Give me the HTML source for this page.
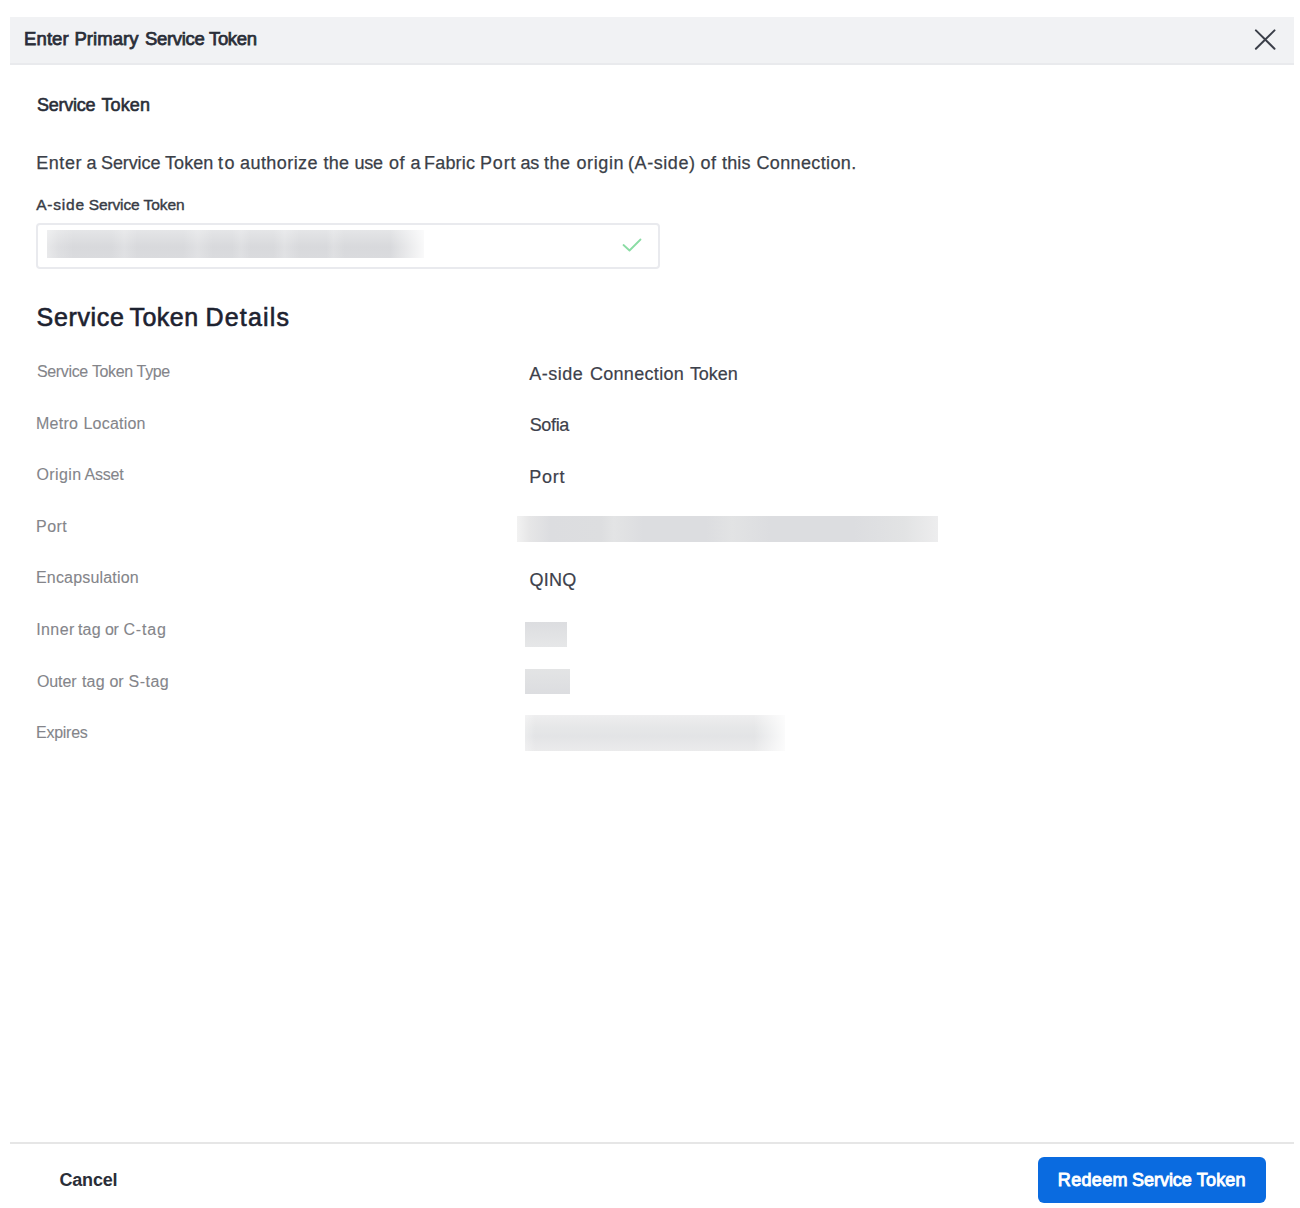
<!DOCTYPE html>
<html>
<head>
<meta charset="utf-8">
<style>
html, body { margin:0; padding:0; }
body { width:1300px; height:1208px; background:#fff; position:relative; overflow:hidden;
  font-family:"Liberation Sans", sans-serif; }
.t { position:absolute; white-space:nowrap; line-height:1; }
#hdr { position:absolute; left:10px; top:17px; width:1284px; height:48px; background:#f1f2f4;
  box-sizing:border-box; border-bottom:2px solid #e9eaed; }
#close { position:absolute; left:1253px; top:28px; width:24px; height:24px; }
#input { position:absolute; left:36px; top:223px; width:624px; height:46px; box-sizing:border-box;
  border:2px solid #e9eaee; border-radius:4px; background:#fff; }
.blur { position:absolute; }
#footline { position:absolute; left:10px; top:1142px; width:1284px; height:2px; background:#e6e6e6; }
#btn { position:absolute; left:1038px; top:1157px; width:228px; height:46px; background:#0a6be0;
  border-radius:6px; }
.lbl { color:#84858a; -webkit-text-stroke:0.1px #84858a; }
.val { color:#3d414b; -webkit-text-stroke:0.2px #3d414b; }
</style>
</head>
<body>
<div id="hdr"></div>
<div class="t" style="left:24.10px; top:30.34px; font-size:18.5px; letter-spacing:0.086px; -webkit-text-stroke:0.75px #2a2e38; color:#2a2e38;">Enter</div>
<div class="t" style="left:74.40px; top:30.34px; font-size:18.5px; letter-spacing:0.072px; -webkit-text-stroke:0.75px #2a2e38; color:#2a2e38;">Primary</div>
<div class="t" style="left:145.00px; top:30.34px; font-size:18.5px; letter-spacing:-0.316px; -webkit-text-stroke:0.75px #2a2e38; color:#2a2e38;">Service</div>
<div class="t" style="left:209.00px; top:30.34px; font-size:18.5px; letter-spacing:-0.350px; -webkit-text-stroke:0.75px #2a2e38; color:#2a2e38;">Token</div>
<svg id="close" viewBox="0 0 24 24"><path d="M2.9 2.4 L21.5 20.7 M21.5 2.4 L2.9 20.7" stroke="#3b3f49" stroke-width="2" stroke-linecap="round" fill="none"/></svg>
<div class="t" style="left:37.00px; top:95.76px; font-size:18px; letter-spacing:-0.252px; -webkit-text-stroke:0.6px #2a2e38; color:#2a2e38;">Service</div>
<div class="t" style="left:101.50px; top:95.76px; font-size:18px; letter-spacing:0.120px; -webkit-text-stroke:0.6px #2a2e38; color:#2a2e38;">Token</div>
<div class="t" style="left:36.20px; top:153.96px; font-size:18px; letter-spacing:0.568px; -webkit-text-stroke:0.25px #3b3f48; color:#3b3f48;">Enter</div>
<div class="t" style="left:86.50px; top:153.96px; font-size:18px; letter-spacing:0.000px; -webkit-text-stroke:0.25px #3b3f48; color:#3b3f48;">a</div>
<div class="t" style="left:101.00px; top:153.96px; font-size:18px; letter-spacing:-0.102px; -webkit-text-stroke:0.25px #3b3f48; color:#3b3f48;">Service</div>
<div class="t" style="left:165.00px; top:153.96px; font-size:18px; letter-spacing:0.070px; -webkit-text-stroke:0.25px #3b3f48; color:#3b3f48;">Token</div>
<div class="t" style="left:218.10px; top:153.96px; font-size:18px; letter-spacing:1.499px; -webkit-text-stroke:0.25px #3b3f48; color:#3b3f48;">to</div>
<div class="t" style="left:240.00px; top:153.96px; font-size:18px; letter-spacing:0.433px; -webkit-text-stroke:0.25px #3b3f48; color:#3b3f48;">authorize</div>
<div class="t" style="left:323.50px; top:153.96px; font-size:18px; letter-spacing:0.244px; -webkit-text-stroke:0.25px #3b3f48; color:#3b3f48;">the</div>
<div class="t" style="left:354.50px; top:153.96px; font-size:18px; letter-spacing:-0.255px; -webkit-text-stroke:0.25px #3b3f48; color:#3b3f48;">use</div>
<div class="t" style="left:389.00px; top:153.96px; font-size:18px; letter-spacing:0.489px; -webkit-text-stroke:0.25px #3b3f48; color:#3b3f48;">of</div>
<div class="t" style="left:410.50px; top:153.96px; font-size:18px; letter-spacing:0.000px; -webkit-text-stroke:0.25px #3b3f48; color:#3b3f48;">a</div>
<div class="t" style="left:424.00px; top:153.96px; font-size:18px; letter-spacing:0.198px; -webkit-text-stroke:0.25px #3b3f48; color:#3b3f48;">Fabric</div>
<div class="t" style="left:480.00px; top:153.96px; font-size:18px; letter-spacing:0.830px; -webkit-text-stroke:0.25px #3b3f48; color:#3b3f48;">Port</div>
<div class="t" style="left:520.50px; top:153.96px; font-size:18px; letter-spacing:-0.350px; -webkit-text-stroke:0.25px #3b3f48; color:#3b3f48;">as</div>
<div class="t" style="left:544.00px; top:153.96px; font-size:18px; letter-spacing:0.494px; -webkit-text-stroke:0.25px #3b3f48; color:#3b3f48;">the</div>
<div class="t" style="left:576.50px; top:153.96px; font-size:18px; letter-spacing:0.597px; -webkit-text-stroke:0.25px #3b3f48; color:#3b3f48;">origin</div>
<div class="t" style="left:628.00px; top:153.96px; font-size:18px; letter-spacing:0.569px; -webkit-text-stroke:0.25px #3b3f48; color:#3b3f48;">(A-side)</div>
<div class="t" style="left:700.50px; top:153.96px; font-size:18px; letter-spacing:0.489px; -webkit-text-stroke:0.25px #3b3f48; color:#3b3f48;">of</div>
<div class="t" style="left:722.00px; top:153.96px; font-size:18px; letter-spacing:0.163px; -webkit-text-stroke:0.25px #3b3f48; color:#3b3f48;">this</div>
<div class="t" style="left:756.50px; top:153.96px; font-size:18px; letter-spacing:0.364px; -webkit-text-stroke:0.25px #3b3f48; color:#3b3f48;">Connection.</div>
<div class="t" style="left:36.20px; top:197.18px; font-size:15.5px; letter-spacing:0.797px; -webkit-text-stroke:0.4px #383c46; color:#383c46;">A-side</div>
<div class="t" style="left:88.80px; top:197.18px; font-size:15.5px; letter-spacing:-0.144px; -webkit-text-stroke:0.4px #383c46; color:#383c46;">Service</div>
<div class="t" style="left:143.60px; top:197.18px; font-size:15.5px; letter-spacing:-0.060px; -webkit-text-stroke:0.4px #383c46; color:#383c46;">Token</div>
<div id="input"></div>
<div class="blur" style="left:47px; top:230px; width:377px; height:28px;
  background: linear-gradient(to right, rgba(255,255,255,0.4) 0%, rgba(255,255,255,0.15) 3%, rgba(255,255,255,0) 7%, rgba(255,255,255,0) 17%, rgba(255,255,255,0.18) 20.5%, rgba(255,255,255,0) 24%, rgba(255,255,255,0) 36%, rgba(255,255,255,0.2) 40%, rgba(255,255,255,0) 44%, rgba(255,255,255,0) 49%, rgba(255,255,255,0.15) 51.5%, rgba(255,255,255,0) 54%, rgba(255,255,255,0) 60%, rgba(255,255,255,0.2) 63%, rgba(255,255,255,0) 67%, rgba(255,255,255,0) 74%, rgba(255,255,255,0.15) 76%, rgba(255,255,255,0) 79%, rgba(255,255,255,0) 91%, rgba(255,255,255,0.85) 100%),
  linear-gradient(#e4e5e7, #d8d9dc 60%, #dadbde);"></div>
<svg style="position:absolute; left:618px; top:234px;" width="28" height="22" viewBox="0 0 28 22"><path d="M5.5 11 L11.5 16.5 L22.5 5.5" stroke="#8adca4" stroke-width="1.8" stroke-linecap="round" stroke-linejoin="round" fill="none"/></svg>
<div class="t" style="left:36.60px; top:304.83px; font-size:25px; letter-spacing:0.640px; -webkit-text-stroke:0.6px #1d2230; color:#1d2230;">Service</div>
<div class="t" style="left:129.40px; top:304.83px; font-size:25px; letter-spacing:0.523px; -webkit-text-stroke:0.6px #1d2230; color:#1d2230;">Token</div>
<div class="t" style="left:205.40px; top:304.83px; font-size:25px; letter-spacing:1.214px; -webkit-text-stroke:0.6px #1d2230; color:#1d2230;">Details</div>
<div class="t lbl" style="left:37.00px; top:363.95px; font-size:16px; letter-spacing:-0.350px; ">Service</div>
<div class="t lbl" style="left:91.90px; top:363.95px; font-size:16px; letter-spacing:-0.350px; ">Token</div>
<div class="t lbl" style="left:136.60px; top:363.95px; font-size:16px; letter-spacing:-0.350px; ">Type</div>
<div class="t lbl" style="left:35.90px; top:415.55px; font-size:16px; letter-spacing:0.275px; ">Metro</div>
<div class="t lbl" style="left:83.50px; top:415.55px; font-size:16px; letter-spacing:0.201px; ">Location</div>
<div class="t lbl" style="left:36.50px; top:467.15px; font-size:16px; letter-spacing:0.404px; ">Origin</div>
<div class="t lbl" style="left:84.50px; top:467.15px; font-size:16px; letter-spacing:-0.218px; ">Asset</div>
<div class="t lbl" style="left:36.00px; top:518.75px; font-size:16px; letter-spacing:0.467px; ">Port</div>
<div class="t lbl" style="left:36.00px; top:570.35px; font-size:16px; letter-spacing:0.174px; ">Encapsulation</div>
<div class="t lbl" style="left:36.20px; top:621.95px; font-size:16px; letter-spacing:0.415px; ">Inner</div>
<div class="t lbl" style="left:77.90px; top:621.95px; font-size:16px; letter-spacing:0.278px; ">tag</div>
<div class="t lbl" style="left:105.00px; top:621.95px; font-size:16px; letter-spacing:-0.350px; ">or</div>
<div class="t lbl" style="left:123.40px; top:621.95px; font-size:16px; letter-spacing:0.843px; ">C-tag</div>
<div class="t lbl" style="left:36.90px; top:673.55px; font-size:16px; letter-spacing:-0.072px; ">Outer</div>
<div class="t lbl" style="left:81.90px; top:673.55px; font-size:16px; letter-spacing:0.278px; ">tag</div>
<div class="t lbl" style="left:109.60px; top:673.55px; font-size:16px; letter-spacing:-0.350px; ">or</div>
<div class="t lbl" style="left:128.60px; top:673.55px; font-size:16px; letter-spacing:0.464px; ">S-tag</div>
<div class="t lbl" style="left:36.10px; top:725.15px; font-size:16px; letter-spacing:-0.275px; ">Expires</div>
<div class="t val" style="left:529.30px; top:364.56px; font-size:18px; letter-spacing:0.498px; ">A-side</div>
<div class="t val" style="left:589.90px; top:364.56px; font-size:18px; letter-spacing:0.316px; ">Connection</div>
<div class="t val" style="left:689.90px; top:364.56px; font-size:18px; letter-spacing:-0.030px; ">Token</div>
<div class="t val" style="left:529.70px; top:416.11px; font-size:18px; letter-spacing:-0.350px; ">Sofia</div>
<div class="t val" style="left:529.20px; top:467.66px; font-size:18px; letter-spacing:0.796px; ">Port</div>
<div class="t val" style="left:529.50px; top:570.76px; font-size:18px; letter-spacing:0.266px; ">QINQ</div>
<div class="blur" style="left:517px; top:516px; width:421px; height:26px;
  background: linear-gradient(to right, #f2f2f2 0%, #e6e6e7 3%, #dcdde0 8%, #dddee0 20%, #e3e4e5 23%, #dcdde0 30%, #dcdde0 45%, #e2e3e4 51%, #dcdde0 60%, #dcdde0 80%, #e2e3e4 92%, #ededee 100%);"></div>
<div class="blur" style="left:525px; top:622px; width:42px; height:25px; background:linear-gradient(#dcdde0, #e6e7e8);"></div>
<div class="blur" style="left:525px; top:669px; width:45px; height:25px; background:linear-gradient(#e3e4e5, #dcdde0);"></div>
<div class="blur" style="left:525px; top:715px; width:260px; height:36px;
  background: linear-gradient(to right, rgba(255,255,255,0.3) 0%, rgba(255,255,255,0) 4%, rgba(255,255,255,0) 88%, rgba(255,255,255,0.85) 100%),
  linear-gradient(#eeeeef 0%, #e6e7e8 35%, #e3e4e6 60%, #ebebec 100%);"></div>
<div id="footline"></div>
<div class="t" style="left:59.50px; top:1171.26px; font-size:18px; letter-spacing:-0.205px; font-weight:bold; color:#2a2e38;">Cancel</div>
<div id="btn"></div>
<div class="t" style="left:1057.80px; top:1171.36px; font-size:18px; letter-spacing:0.332px; -webkit-text-stroke:0.9px #fff; color:#fff;">Redeem</div>
<div class="t" style="left:1132.10px; top:1171.36px; font-size:18px; letter-spacing:-0.052px; -webkit-text-stroke:0.9px #fff; color:#fff;">Service</div>
<div class="t" style="left:1196.70px; top:1171.36px; font-size:18px; letter-spacing:0.220px; -webkit-text-stroke:0.9px #fff; color:#fff;">Token</div>
</body>
</html>
